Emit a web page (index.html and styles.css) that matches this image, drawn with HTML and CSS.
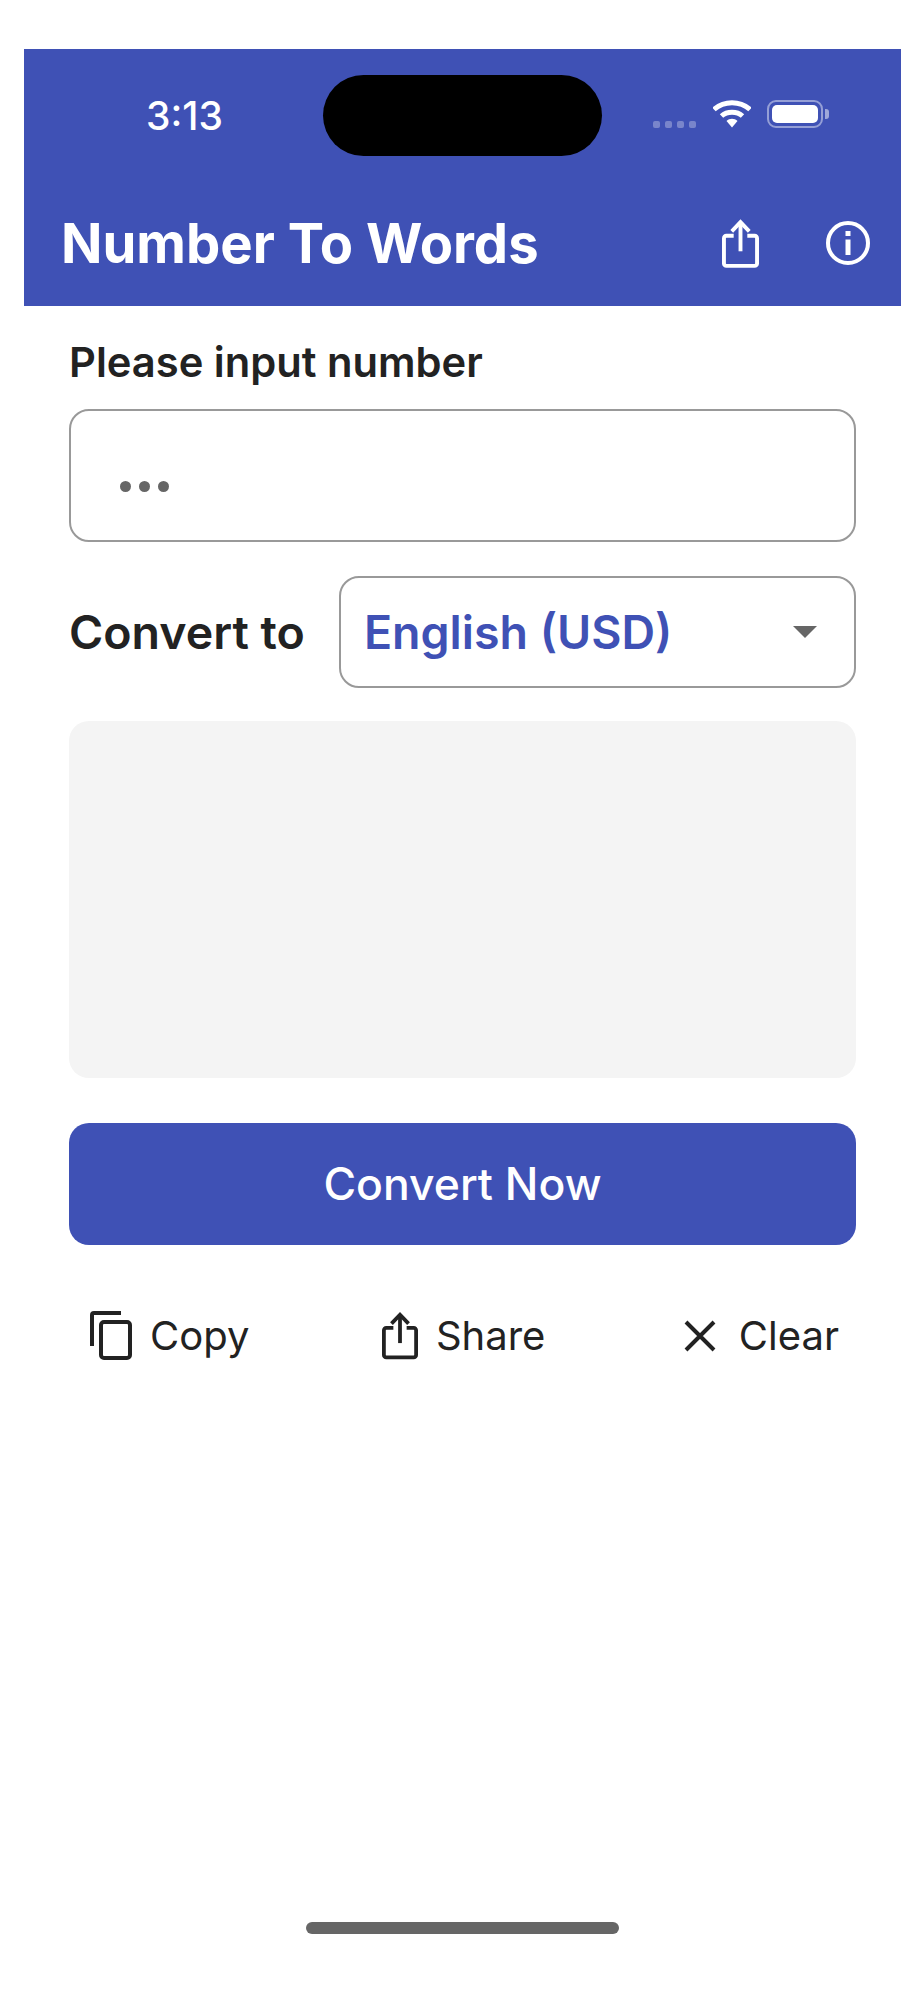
FILE: index.html
```html
<!DOCTYPE html>
<html lang="en">
<head>
    <meta charset="UTF-8">
    <meta name="viewport" content="width=device-width, initial-scale=1.0">
    <title>Number To Words</title>
    <link rel="stylesheet" href="styles.css">
</head>
<body>
    <div class="screen">
        <header class="app-header">
            <div class="status-bar">
                <span class="clock">3:13</span>
                <div class="island"></div>
                <div class="status-icons">
                    <div class="signal"><i></i><i></i><i></i><i></i></div>
                    <svg class="wifi" width="38" height="28" viewBox="0 0 38 28">
                        <path d="M1 9.5C11 .5 27 .5 37 9.5" fill="none" stroke="#fff" stroke-width="5"/>
                        <path d="M8.500 16C14 11 24 11 29.500 16" fill="none" stroke="#fff" stroke-width="5"/>
                        <path d="M13.500 21C16.500 18 21.500 18 24.500 21L19 27.500Z" fill="#fff"/>
                    </svg>
                    <div class="battery"><div class="battery-level"></div></div>
                    <div class="battery-cap"></div>
                </div>
            </div>
            <div class="title-bar">
                <h1>Number To Words</h1>
                <div class="header-actions">
                    <svg width="37" height="49" viewBox="0 0 38 50" fill="none" stroke="#fff" stroke-width="4">
                        <path d="M12 17H4.500A2.500 2.500 0 0 0 2 19.500V45.500A2.500 2.500 0 0 0 4.500 48H33.500a2.500 2.500 0 0 0 2.500-2.500V19.500A2.500 2.500 0 0 0 33.500 17H26"/>
                        <path d="M19 33V4"/>
                        <path d="M10 12.500L19 3l9 9.500"/>
                    </svg>
                    <svg width="46" height="46" viewBox="0 0 46 46" fill="none" stroke="#fff" stroke-width="4">
                        <circle cx="23" cy="23" r="20"/>
                        <path d="M23 19.500V35" stroke-width="5"/>
                        <path d="M23 11v5" stroke-width="5"/>
                    </svg>
                </div>
            </div>
        </header>

        <main class="content">
            <label class="field-label">Please input number</label>
            <div class="number-input">
                <span class="placeholder-dots"><i></i><i></i><i></i></span>
            </div>

            <div class="convert-row">
                <span class="convert-label">Convert to</span>
                <div class="select-box">
                    <span>English (USD)</span>
                    <div class="caret"></div>
                </div>
            </div>

            <div class="result-box"></div>

            <button class="convert-button">Convert Now</button>

            <div class="actions">
                <div class="action">
                    <svg width="42" height="49" viewBox="0 0 42 49" fill="none" stroke="#222" stroke-width="4">
                        <path d="M31 2H4a2 2 0 0 0-2 2V35"/>
                        <rect x="11" y="11" width="29" height="36" rx="3"/>
                    </svg>
                    <span>Copy</span>
                </div>
                <div class="action action-share">
                    <svg width="36" height="49" viewBox="0 0 38 50" fill="none" stroke="#222" stroke-width="4">
                        <path d="M12 17H4.500A2.500 2.500 0 0 0 2 19.500V45.500A2.500 2.500 0 0 0 4.500 48H33.500a2.500 2.500 0 0 0 2.500-2.500V19.500A2.500 2.500 0 0 0 33.500 17H26"/>
                        <path d="M19 33V4"/>
                        <path d="M10 12.500L19 3l9 9.500"/>
                    </svg>
                    <span>Share</span>
                </div>
                <div class="action action-clear">
                    <svg width="32" height="32" viewBox="0 0 32 32" fill="none" stroke="#222" stroke-width="4">
                        <path d="M2 2L30 30M30 2L2 30"/>
                    </svg>
                    <span>Clear</span>
                </div>
            </div>
        </main>
    </div>

    <div class="home-indicator"></div>
</body>
</html>
```

FILE: styles.css
```css
* {
    box-sizing: border-box;
}
html, body {
    margin: 0;
    background-color: #fff;
}
body {
    height: 2000px;
    padding: 49px 23px 0 24px;
    font-family: Inter, "Noto Sans", sans-serif;
    color: #222;
    position: relative;
    overflow: hidden;
}
.app-header {
    background-color: #3f51b5;
    height: 257px;
    color: #fff;
}
.status-bar {
    height: 127px;
    padding-top: 25px;
    position: relative;
    display: flex;
}
.clock {
    margin: 22px 0 0 122px;
    font-size: 39px;
    font-weight: 500;
    line-height: 40px;
}
.island {
    position: absolute;
    left: 299px;
    top: 26px;
    width: 279px;
    height: 81px;
    border-radius: 41px;
    background-color: #000;
}
.status-icons {
    position: absolute;
    left: 629px;
    top: 51px;
    display: flex;
    align-items: flex-start;
}
.signal {
    display: flex;
    gap: 5px;
    margin-top: 21px;
    margin-right: 17px;
}
.signal i {
    width: 7px;
    height: 7px;
    border-radius: 2px;
    background-color: rgba(255, 255, 255, 0.3);
}
.battery {
    width: 56px;
    height: 28px;
    margin-left: 16px;
    padding: 3px;
    border: 2px solid rgba(255, 255, 255, 0.45);
    border-radius: 9px;
}
.battery-level {
    height: 100%;
    border-radius: 5px;
    background-color: #fff;
}
.battery-cap {
    width: 4px;
    height: 10px;
    margin: 9px 0 0 2px;
    border-radius: 0 3px 3px 0;
    background-color: rgba(255, 255, 255, 0.5);
}
.title-bar {
    height: 130px;
    padding: 4px 30px 0 37px;
    display: flex;
    align-items: center;
    justify-content: space-between;
}
.title-bar h1 {
    margin: 0;
    font-size: 54.4px;
    font-weight: 700;
    line-height: 60px;
}
.header-actions {
    display: flex;
    align-items: center;
    gap: 66px;
}
.content {
    padding: 0 45px 0 45px;
}
.field-label {
    display: block;
    margin-top: 33px;
    font-size: 41.7px;
    font-weight: 600;
    line-height: 46px;
}
.number-input {
    height: 133px;
    margin-top: 24px;
    padding: 0 49px;
    border: 2px solid #999;
    border-radius: 20px;
    display: flex;
    align-items: center;
}
.placeholder-dots {
    display: flex;
    gap: 8px;
    margin-top: 22px;
}
.placeholder-dots i {
    width: 11px;
    height: 11px;
    border-radius: 50%;
    background-color: #666;
}
.convert-row {
    display: flex;
    align-items: center;
    gap: 34px;
    margin-top: 34px;
}
.convert-label {
    font-size: 46.5px;
    font-weight: 600;
    white-space: nowrap;
}
.select-box {
    flex: 1;
    height: 112px;
    padding: 0 37px 0 23px;
    border: 2px solid #999;
    border-radius: 20px;
    display: flex;
    align-items: center;
    justify-content: space-between;
    color: #3f51b5;
    font-size: 46.5px;
    font-weight: 600;
}
.caret {
    width: 0;
    height: 0;
    border-left: 12px solid transparent;
    border-right: 12px solid transparent;
    border-top: 12px solid #666;
}
.result-box {
    height: 357px;
    margin-top: 33px;
    border-radius: 20px;
    background-color: #f4f4f4;
}
.convert-button {
    display: block;
    width: 100%;
    height: 122px;
    margin-top: 45px;
    border: none;
    border-radius: 20px;
    background-color: #3f51b5;
    color: #fff;
    font-family: inherit;
    font-size: 44.5px;
    font-weight: 500;
}
.actions {
    display: flex;
    justify-content: space-between;
    align-items: center;
    margin-top: 66px;
    padding: 0 17px 0 21px;
}
.action {
    display: flex;
    align-items: center;
    gap: 18px;
    font-size: 40px;
    color: #222;
}
.action-share {
    margin-right: 6px;
}
.action-clear {
    gap: 23px;
}
.home-indicator {
    position: absolute;
    left: 306px;
    top: 1922px;
    width: 313px;
    height: 12px;
    border-radius: 6px;
    background-color: #666;
}
```
